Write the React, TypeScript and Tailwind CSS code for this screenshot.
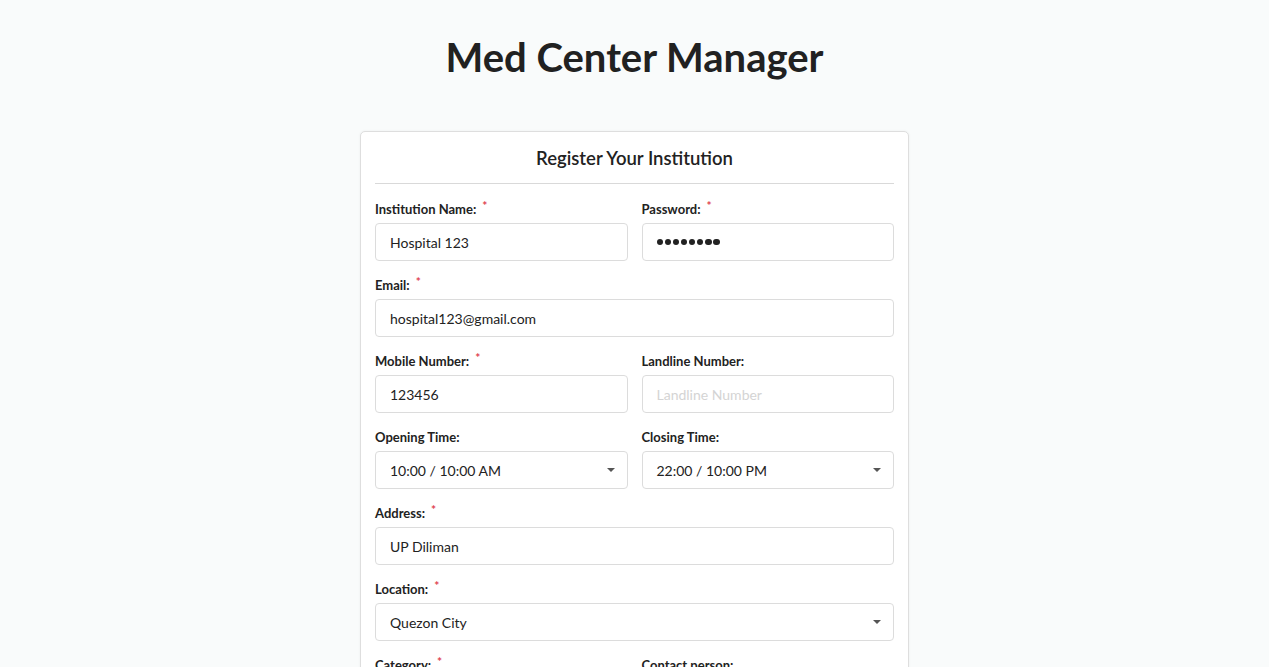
const Req = () => <span className="ml-[6px] align-top text-[12px] leading-none text-[#e0424f]">*</span>;

const Label = ({ text, req }: { text: string; req?: boolean }) => (
  <label className="mb-[5px] block h-[18px] text-[13px] font-bold leading-[18px] text-[#222]">
    {text}
    {req && <Req />}
  </label>
);

const Caret = () => (
  <svg width="8" height="4" viewBox="0 0 8 4" className="shrink-0">
    <path d="M0 0h8L4 4z" fill="#555" />
  </svg>
);

const Dots = ({ n }: { n: number }) => (
  <span className="flex gap-[1.6px]">
    {Array.from({ length: n }).map((_, i) => (
      <span key={i} className="h-[6.5px] w-[6.5px] rounded-full bg-[#222]" />
    ))}
  </span>
);

const Field = ({ label, req, value, placeholder, password }: { label: string; req?: boolean; value?: string; placeholder?: string; password?: boolean }) => (
  <div className="mb-[15px] flex-1">
    <Label text={label} req={req} />
    <div className="flex h-[38px] items-center rounded-[4px] border border-[#dcdcdc] bg-white px-[14px] text-[14px]">
      {password ? (
        <Dots n={8} />
      ) : value ? (
        <span className="text-[#222]">{value}</span>
      ) : (
        <span className="text-[#d4d4d4]">{placeholder}</span>
      )}
    </div>
  </div>
);

const Select = ({ label, req, value }: { label: string; req?: boolean; value: string }) => (
  <div className="mb-[15px] flex-1">
    <Label text={label} req={req} />
    <div className="flex h-[38px] items-center justify-between rounded-[4px] border border-[#dcdcdc] bg-white pl-[14px] pr-[12px] text-[14px] text-[#222]">
      <span>{value}</span>
      <Caret />
    </div>
  </div>
);

export default function App() {
  return (
    <div className="min-h-screen bg-[#f9fbfb] pb-10 font-['Lato',sans-serif] text-[#222]">
      <h1 className="pt-[33px] text-center text-[40px] font-bold leading-[48px] text-[#212121]">Med Center Manager</h1>

      <div className="mx-auto mt-[50px] w-[549px] rounded-[5px] border border-[#dedede] bg-white px-[14px] pt-[14px] shadow-[0_0_3px_rgba(0,0,0,0.05)]">
        <h2 className="text-center text-[18.5px] font-semibold leading-[24px] text-[#222]">Register Your Institution</h2>
        <hr className="mb-[16px] mt-[13px] border-[#d9d9d9]" />

        <div className="flex gap-[14px]">
          <Field label="Institution Name:" req value="Hospital 123" />
          <Field label="Password:" req password />
        </div>
        <Field label="Email:" req value="hospital123@gmail.com" />
        <div className="flex gap-[14px]">
          <Field label="Mobile Number:" req value="123456" />
          <Field label="Landline Number:" placeholder="Landline Number" />
        </div>
        <div className="flex gap-[14px]">
          <Select label="Opening Time:" value="10:00 / 10:00 AM" />
          <Select label="Closing Time:" value="22:00 / 10:00 PM" />
        </div>
        <Field label="Address:" req value="UP Diliman" />
        <Select label="Location:" req value="Quezon City" />
        <div className="flex gap-[14px]">
          <Select label="Category:" req value="Hospital" />
          <Field label="Contact person:" placeholder="Contact person" />
        </div>
        <div className="pb-[15px] pt-[5px]">
          <button className="h-[38px] w-full rounded-[4px] bg-[#2f80ed] text-[14px] font-bold text-white">Register</button>
        </div>
      </div>
    </div>
  );
}
